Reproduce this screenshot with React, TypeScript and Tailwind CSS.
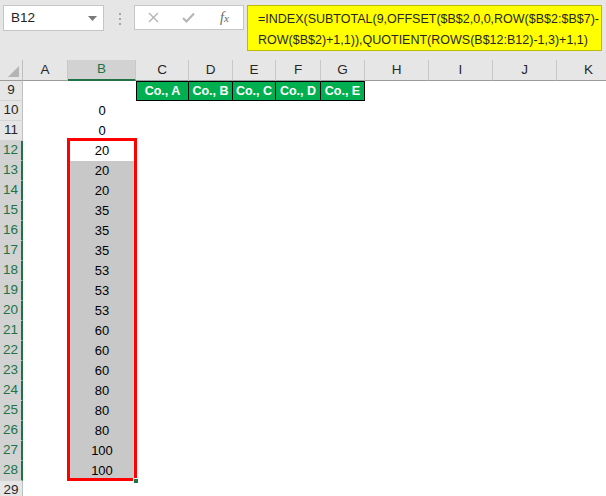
import React from 'react';

const COLS = ['A', 'B', 'C', 'D', 'E', 'F', 'G', 'H', 'I', 'J', 'K'];
const COMPANIES = ['Co., A', 'Co., B', 'Co., C', 'Co., D', 'Co., E'];
const VALUES = [0, 0, 20, 20, 20, 35, 35, 35, 53, 53, 53, 60, 60, 60, 80, 80, 80, 100, 100];

function RowHeader({ n, selected }: { n: number; selected: boolean }) {
  return (
    <div
      className={`flex items-center justify-center border-b border-[#d4d4d4] text-[13.5px] ${
        selected
          ? 'bg-[#d2d2d2] text-[#217346] border-r-2 border-r-[#217346]'
          : 'bg-[#e6e6e6] text-[#262626] border-r border-r-[#bfbfbf]'
      }`}
    >
      {n}
    </div>
  );
}

export default function App() {
  const rows = [9, ...VALUES.map((_, i) => 10 + i), 29];

  return (
    <div className="w-[606px] h-[496px] overflow-hidden bg-white font-['Liberation_Sans',Arial,sans-serif]">
      {/* FORMULA BAR */}
      <div className="h-[60px] bg-[#e6e6e6] flex items-start pt-[5px] pl-[3px]">
        <div className="w-[101px] h-[26px] bg-white border border-[#c6c6c6] flex items-center justify-between pl-[7px] pr-[6px]">
          <span className="text-[13.5px] text-[#222]">B12</span>
          <svg width="9" height="5" viewBox="0 0 9 5">
            <path d="M0 0H9L4.5 5Z" fill="#7a7a7a" />
          </svg>
        </div>
        <div className="ml-[15px] mt-[8px] flex flex-col gap-[3px]">
          <span className="w-[2px] h-[2px] bg-[#a6a6a6]" />
          <span className="w-[2px] h-[2px] bg-[#a6a6a6]" />
          <span className="w-[2px] h-[2px] bg-[#a6a6a6]" />
        </div>
        <div className="ml-[13px] w-[110px] h-[25px] bg-white border border-[#c6c6c6] flex items-center">
          <svg className="ml-[13px]" width="11" height="11" viewBox="0 0 11 11">
            <path d="M1 1L10 10M10 1L1 10" stroke="#b4b4b4" strokeWidth="1.4" />
          </svg>
          <svg className="ml-[23px]" width="13" height="11" viewBox="0 0 13 11">
            <path d="M1 6L4.5 9.5L12 1.5" stroke="#b4b4b4" strokeWidth="2" fill="none" />
          </svg>
          <span className="ml-[25px] text-[14px] italic text-[#666] font-['Liberation_Serif',serif] leading-none">
            f<span className="text-[11px]">x</span>
          </span>
        </div>
        <div className="ml-[3px] w-[355px] h-[46px] bg-[#ffff00] border border-[#bdbd00] pl-[10px] pt-[3px] text-[12.5px] leading-[21px] text-[#262626]">
          <div>=INDEX(SUBTOTAL(9,OFFSET($B$2,0,0,ROW($B$2:$B$7)-</div>
          <div>ROW($B$2)+1,1)),QUOTIENT(ROWS(B$12:B12)-1,3)+1,1)</div>
        </div>
      </div>

      {/* SHEET */}
      <div className="relative">
        <div className="grid grid-cols-[23px_45px_68px_53px_44px_43px_45px_44px_64px_64px_64px_64px] grid-rows-[21px] auto-rows-[20px] w-[621px]">
          {/* corner */}
          <div className="bg-[#e6e6e6] border-r border-b border-[#9b9b9b] border-r-[#bfbfbf] flex items-end justify-end pr-[3px] pb-[3px]">
            <svg width="11" height="11" viewBox="0 0 11 11">
              <path d="M11 0V11H0Z" fill="#b4b4b4" />
            </svg>
          </div>
          {COLS.map((c) => (
            <div
              key={c}
              className={`flex items-center justify-center text-[13.5px] border-r border-r-[#c8c8c8] ${
                c === 'B'
                  ? 'bg-[#d2d2d2] text-[#217346] border-b-2 border-b-[#217346]'
                  : 'bg-[#e6e6e6] text-[#262626] border-b border-b-[#9b9b9b]'
              }`}
            >
              {c}
            </div>
          ))}

          {rows.map((r) => (
            <React.Fragment key={r}>
              <RowHeader n={r} selected={r >= 12 && r <= 28} />
              {COLS.map((c, ci) => {
                if (r === 9 && ci >= 2 && ci <= 6) {
                  return (
                    <div
                      key={c}
                      className={`bg-[#00b050] border-y border-r border-black flex items-center justify-center text-[12.5px] font-bold text-white ${
                        ci === 2 ? 'border-l' : ''
                      }`}
                    >
                      {COMPANIES[ci - 2]}
                    </div>
                  );
                }
                if (c === 'B' && r >= 10 && r <= 28) {
                  return (
                    <div
                      key={c}
                      className={`flex items-center justify-center text-[13px] text-black ${
                        r >= 13 ? 'bg-[#c8c8c8]' : ''
                      }`}
                    >
                      {VALUES[r - 10]}
                    </div>
                  );
                }
                return <div key={c} />;
              })}
            </React.Fragment>
          ))}
        </div>

        {/* selection outline */}
        <div className="absolute left-[67px] top-[78px] w-[70px] h-[343px] border-[3px] border-[#ff0000] pointer-events-none" />
        <div className="absolute left-[133px] top-[418px] w-[6px] h-[6px] bg-[#217346] border border-white" />
      </div>
    </div>
  );
}
